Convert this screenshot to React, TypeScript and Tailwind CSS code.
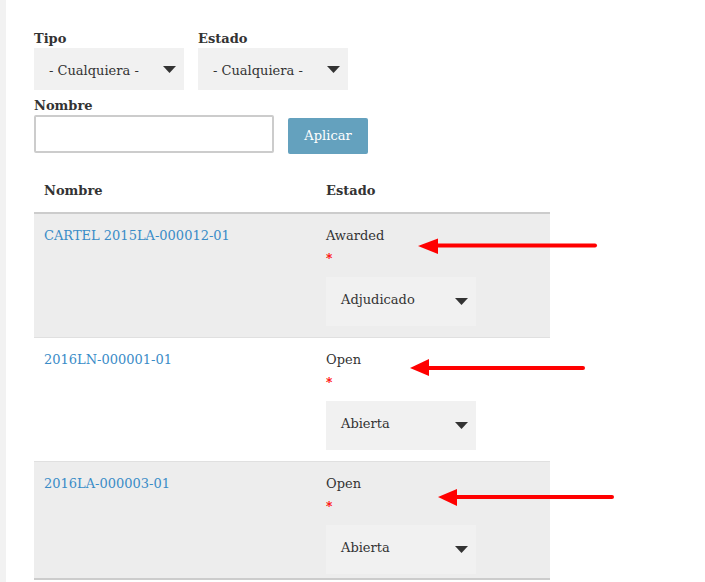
import React from "react";

const font = { fontFamily: '"DejaVu Serif", "Liberation Serif", serif' };

function Caret() {
  return (
    <svg width="13" height="7" viewBox="0 0 13 7" className="shrink-0">
      <polygon points="0,0 13,0 6.5,7" fill="#333333" />
    </svg>
  );
}

function FakeSelect({ label, h, textPad }: { label: string; h: string; textPad: string }) {
  return (
    <div className={`flex w-[150px] ${h} items-center justify-between bg-[#f1f1f1] pl-[15px] pr-[8px] text-[13px] text-[#333]`}>
      <span className={textPad}>{label}</span>
      <Caret />
    </div>
  );
}

function Row({ name, status, value, bg, last }: { name: string; status: string; value: string; bg: string; last?: boolean }) {
  return (
    <div className={`flex ${bg} ${last ? "border-b-2 border-[#cccccc] pb-[4px]" : "border-b border-[#e0e0e0] pb-[11px]"} pt-[12px]`}>
      <div className="w-[282px] pl-[10px] text-[13px] leading-[20px] text-[#3a8cc7]">{name}</div>
      <div className="flex flex-col pl-[10px]">
        <div className="text-[13px] leading-[20px] text-[#333]">{status}</div>
        <div className="mt-[4px] h-[18px] text-[12px] font-bold leading-[18px] text-[#ff0000]">*</div>
        <div className="mt-[9px]">
          <FakeSelect label={value} h="h-[49px]" textPad="pb-[4px]" />
        </div>
      </div>
    </div>
  );
}

export default function App() {
  return (
    <div className="relative flex h-[582px] w-[705px] overflow-hidden bg-white" style={font}>
      <div className="w-[6px] shrink-0 bg-[#f2f2f2]" />
      <div className="flex flex-col pl-[28px] pt-[30px]">
        <div className="flex gap-[14px]">
          <div className="flex flex-col">
            <div className="text-[13px] font-bold leading-[18px] text-[#333]">Tipo</div>
            <FakeSelect label="- Cualquiera -" h="h-[42px]" textPad="pt-[3px]" />
          </div>
          <div className="flex flex-col">
            <div className="text-[13px] font-bold leading-[18px] text-[#333]">Estado</div>
            <FakeSelect label="- Cualquiera -" h="h-[42px]" textPad="pt-[3px]" />
          </div>
        </div>
        <div className="mt-[7px] text-[13px] font-bold leading-[18px] text-[#333]">Nombre</div>
        <div className="flex items-start gap-[14px]">
          <div className="h-[38px] w-[240px] rounded-[2px] border-2 border-[#cccccc] bg-white" />
          <button className="mt-[3px] h-[36px] w-[80px] rounded-[2px] bg-[#64a1be] text-[13px] text-white">Aplicar</button>
        </div>
        <div className="mt-[15px] w-[516px]">
          <div className="flex h-[45px] items-center border-b-2 border-[#cccccc] text-[13px] font-bold text-[#333]">
            <div className="w-[282px] pl-[10px]">Nombre</div>
            <div className="pl-[10px]">Estado</div>
          </div>
          <Row name="CARTEL 2015LA-000012-01" status="Awarded" value="Adjudicado" bg="bg-[#ededed]" />
          <Row name="2016LN-000001-01" status="Open" value="Abierta" bg="bg-white" />
          <Row name="2016LA-000003-01" status="Open" value="Abierta" bg="bg-[#ededed]" last />
        </div>
      </div>
      <svg className="pointer-events-none absolute inset-0" width="705" height="582" viewBox="0 0 705 582">
        <line x1="436" y1="245.5" x2="595" y2="245.5" stroke="#ff0000" strokeWidth="4" strokeLinecap="round" />
        <polygon points="418,246 438,238.5 438,254" fill="#ff0000" />
        <line x1="427" y1="368" x2="583" y2="368" stroke="#ff0000" strokeWidth="4" strokeLinecap="round" />
        <polygon points="410,368 429,359 429,376" fill="#ff0000" />
        <line x1="455" y1="497" x2="612" y2="497" stroke="#ff0000" strokeWidth="4" strokeLinecap="round" />
        <polygon points="438,497 457,489 457,506" fill="#ff0000" />
      </svg>
    </div>
  );
}
